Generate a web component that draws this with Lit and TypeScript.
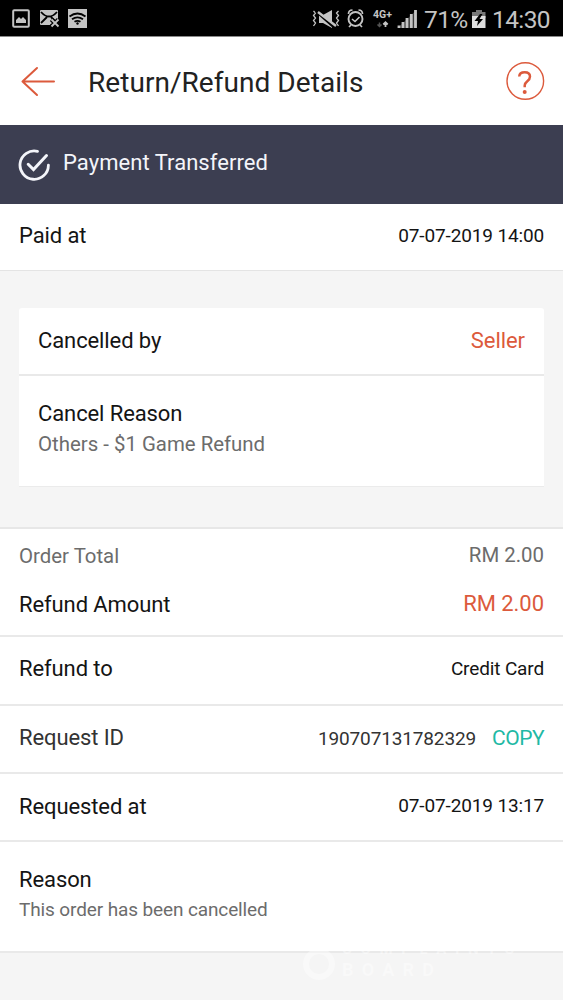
import { LitElement, html, css } from "lit";
import { customElement } from "lit/decorators.js";

@customElement("status-bar")
class StatusBar extends LitElement {
  static styles = css`
    :host { display: flex; justify-content: space-between; height: 37px; background: #000; border-bottom: 1px solid #8a8a8a; color: #c4c4c4; box-sizing: border-box; }
    svg { display: block; }
    .right { display: flex; height: 36px; }
    .num { font-size: 24.5px; line-height: 28px; padding-top: 6px; white-space: pre; }
    .pct { width: 43px; letter-spacing: -0.6px; }
    .time { width: 71px; letter-spacing: -0.6px; }
  `;
  render() {
    return html`
      <svg width="100" height="36" fill="none">
        <rect x="13.2" y="10.2" width="15.6" height="16.6" rx="1" stroke="#c4c4c4" stroke-width="2"/>
        <path d="M16 23v-3l3-3 2 2 2-2 3 3v3z" fill="#c4c4c4"/>
        <path d="M41 10h16q1 0 1 1v8l-8 6H41q-1 0-1-1V11q0-1 1-1z" fill="#c4c4c4"/>
        <path d="M41 12q8 9 16 0M41 23l6-6M57 23l-6-6" stroke="#000" stroke-width="1.8"/>
        <path d="M51.500 19.500l7 7M58.500 19.500l-7 7" stroke="#000" stroke-width="4.500"/>
        <path d="M51.500 19.500l7 7M58.500 19.500l-7 7" stroke="#c4c4c4" stroke-width="1.8"/>
        <rect x="68" y="9" width="19" height="19" fill="#c4c4c4"/>
        <path d="M69.500 16.500q8-6 16 0M72 19.300q5.500-4 11 0M74.500 21.800q3-2 6 0" stroke="#000" stroke-width="1.8"/>
        <circle cx="77.500" cy="23.500" r="1.200" fill="#000"/>
      </svg>
      <div class="right">
        <svg width="113" height="36" fill="none" stroke="#c4c4c4">
          <path d="M2.500 11l2 2-2 2.500 2 2.500-2 2.500 2 2.500-2 3M27.500 11l-2 2 2 2.500-2 2.500 2 2.500-2 2.500 2 3" stroke-width="1.300"/>
          <path d="M8 15h4l9-5v18l-9-5H8z" fill="#c4c4c4" stroke="none"/>
          <path d="M5 11L24 28" stroke="#000" stroke-width="3"/>
          <path d="M7 12L25 26" stroke-width="2.400"/>
          <circle cx="44.500" cy="19" r="7" stroke-width="1.900"/>
          <path d="M41 19l3 2.500 4.500-4.500" stroke-width="1.600"/>
          <path d="M37.500 14q0-4 4-4M51.500 14q0-4-4-4M40 25l-2 2M49 25l2 2" stroke-width="1.700"/>
          <text x="62" y="18" font-size="10.500" font-weight="700" font-family="Roboto" fill="#c4c4c4" stroke="none" textLength="19">4G+</text>
          <path d="M68.500 22.500v4M66.500 24.500l2 2 2-2" stroke="#555" stroke-width="1.500"/>
          <path d="M74.500 27v-4M72.300 24.500l2.200-2.200 2.200 2.200" stroke-width="1.800"/>
          <path d="M86.500 28L105.500 10V28z" fill="#3a3a3a" stroke="none"/>
          <path d="M88 28v-2.500M92 28v-6M96 28v-10M100.300 28v-14M104.500 28V10" stroke-width="2.800"/>
        </svg>
        <div class="num pct">71%</div>
        <svg width="25" height="36">
          <path d="M9 10h6v2h3.500v6H5v-6h4z" fill="#777"/>
          <rect x="5" y="16" width="13.500" height="12" fill="#dedede"/>
          <path d="M13 14l-5.500 7h3.500l-1 5 6-7h-3.500l3-5z" fill="#000"/>
        </svg>
        <div class="num time">14:30</div>
      </div>`;
  }
}

@customElement("app-root")
class AppRoot extends LitElement {
  static styles = css`
    :host { display: block; position: relative; width: 563px; height: 1000px; overflow: hidden; background: #f5f5f5; font-family: Roboto, "Liberation Sans", sans-serif; color: #141414; }
    * { box-sizing: border-box; }
    svg { display: block; flex: none; }
    .header { height: 88px; background: #fff; display: flex; align-items: flex-start; padding: 0 18px 0 20px; }
    .title { flex: 1; font-size: 28px; line-height: 34px; padding: 29px 0 0 31px; color: #222; letter-spacing: 0.05px; }
    .back { margin-top: 27px; }
    .help { margin-top: 24px; }
    .banner { height: 79px; background: #3c3e51; color: #f4f5fa; display: flex; padding-left: 18px; gap: 13px; }
    .banner svg { margin-top: 23px; }
    .banner span { font-size: 22px; line-height: 26px; padding-top: 25px; letter-spacing: 0.05px; }
    .row { display: flex; justify-content: space-between; align-items: baseline; padding: 0 19px; background: #fff; white-space: nowrap; }
    .line { border-bottom: 2px solid #e9e9e9; }
    .l { font-size: 22px; line-height: 26px; letter-spacing: -0.1px; }
    .v { font-size: 19px; line-height: 26px; letter-spacing: -0.14px; position: relative; top: -1px; }
    .m { font-size: 22px; line-height: 26px; letter-spacing: -0.05px; }
    .up { position: relative; top: -1px; }
    .orange { color: #dc5a3c; }
    .grey { color: #7d7d7d; }
    .dim { color: #333; }
    .sub { font-size: 20.4px; line-height: 26px; color: #6c6c6c; }
    .below { padding-top: 4px; }
    .small { font-size: 19px; letter-spacing: -0.12px; }
    .paid { height: 67px; padding-top: 19px; border-bottom: 1px solid #e4e4e4; }
    .card { margin: 37px 19px 40px; background: #fff; border-radius: 3px 3px 0 0; border-bottom: 1px solid #ebebeb; height: 179px; }
    .by { height: 68px; padding-top: 20px; background: none; }
    .reason { padding: 25px 19px 0; }
    .order { height: 50px; padding-top: 14px; border-top: 2px solid #e7e7e7; }
    .amount { height: 60px; padding-top: 15px; }
    .to { height: 69px; padding-top: 19px; }
    .request { height: 68px; padding-top: 19px; }
    .at { height: 68px; padding-top: 20px; }
    .at .v { top: -2px; }
    .why { height: 111px; padding: 25px 19px 0; background: #fff; }
    .id { margin-left: auto; margin-right: 16px; top: 0; }
    .copy { font-size: 21px; line-height: 26px; letter-spacing: -0.5px; color: #1fb9a5; }
    .mark { position: absolute; left: 298px; top: 934px; }
  `;
  render() {
    return html`
      <status-bar></status-bar>
      <div class="header">
        <svg class="back" width="37" height="34" fill="none" stroke="#dc5a3c" stroke-width="2" stroke-linecap="round" stroke-linejoin="round"><path d="M34 17.500H2.500M17 4L2.500 17.500 17 31"/></svg>
        <div class="title">Return/Refund Details</div>
        <svg class="help" width="40" height="40" fill="none" stroke="#dc5a3c">
          <circle cx="20.300" cy="20" r="18.300" stroke-width="1.400"/>
          <path d="M14.200 15.500q.3-4.300 5.500-4.300t5.300 4.300q0 2.600-2.700 4.700-2.600 2-2.600 4.300v1.700" stroke-width="2.500"/>
          <circle cx="19.700" cy="31" r="2" fill="#dc5a3c" stroke="none"/>
        </svg>
      </div>
      <div class="banner">
        <svg width="32" height="34" fill="none" stroke="#f4f5fa" stroke-width="2.800" stroke-linecap="round">
          <path d="M19.500 3.300A14.200 14.200 0 1 0 30.400 17.200"/><path d="M10.200 16.300l5.300 5.200L28.500 7.500" stroke-width="3"/>
        </svg>
        <span>Payment Transferred</span>
      </div>
      <div class="row paid"><span class="l">Paid at</span><span class="v">07-07-2019 14:00</span></div>
      <div class="card">
        <div class="row line by"><span class="l">Cancelled by</span><span class="m orange">Seller</span></div>
        <div class="reason"><div class="l">Cancel Reason</div><div class="sub below">Others - $1 Game Refund</div></div>
      </div>
      <div class="row order"><span class="sub grey">Order Total</span><span class="sub grey up">RM 2.00</span></div>
      <div class="row line amount"><span class="l">Refund Amount</span><span class="m orange up">RM 2.00</span></div>
      <div class="row line to"><span class="l">Refund to</span><span class="v">Credit Card</span></div>
      <div class="row line request"><span class="l dim">Request ID</span><span class="v id dim">190707131782329</span><span class="copy">COPY</span></div>
      <div class="row line at"><span class="l">Requested at</span><span class="v">07-07-2019 13:17</span></div>
      <div class="why line"><div class="l">Reason</div><div class="sub small below">This order has been cancelled</div></div>
      <svg class="mark" width="230" height="50" fill="none">
        <circle cx="21" cy="30" r="13" stroke="#fff" stroke-width="6" opacity="0.4"/>
        <g fill="#fff" opacity="0.4" font-family="Roboto" font-weight="700"><text x="44" y="20" font-size="15" textLength="172">COMPLAINTS</text><text x="44" y="42" font-size="18" textLength="92">BOARD</text></g>
      </svg>`;
  }
}
